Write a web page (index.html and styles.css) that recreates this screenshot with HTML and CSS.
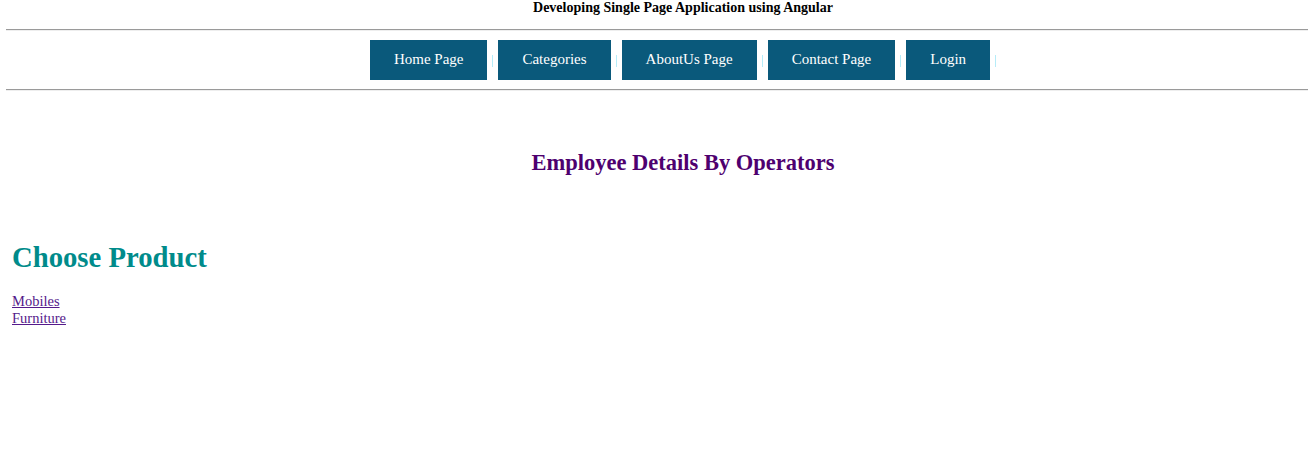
FILE: index.html
```html
<!DOCTYPE html>
<html>
<head>
<meta charset="utf-8">
<title>Angular SPA</title>
<link rel="stylesheet" href="styles.css">
</head>
<body>
<div class="page">
  <div class="title">Developing Single Page Application using Angular</div>
  <div class="rule"></div>
  <nav class="nav">
    <a class="btn" href="#">Home Page</a><span class="sep"></span>
    <a class="btn" href="#">Categories</a><span class="sep"></span>
    <a class="btn" href="#">AboutUs Page</a><span class="sep"></span>
    <a class="btn" href="#">Contact Page</a><span class="sep"></span>
    <a class="btn" href="#">Login</a><span class="sep"></span>
  </nav>
  <div class="rule"></div>
  <h2 class="emp">Employee Details By Operators</h2>
  <div class="product">
    <h1 class="choose">Choose Product</h1>
    <div class="links">
      <a class="link" href="#">Mobiles</a>
      <a class="link" href="#">Furniture</a>
    </div>
  </div>
</div>
</body>
</html>
```
FILE: styles.css
```css
html, body {
  margin: 0;
  padding: 0;
  background: #fff;
  overflow: hidden;
}
body {
  font-family: "Liberation Serif", "Times New Roman", serif;
  color: #000;
}
.page {
  width: 1354px;
  margin-left: 6px;
  display: flex;
  flex-direction: column;
}
.title {
  text-align: center;
  font-weight: bold;
  font-size: 14px;
  line-height: 15px;
  margin-top: 0;
  height: 29px;
}
.rule {
  height: 0;
  border-top: 1px solid #9a9a9a;
  border-bottom: 1px solid #eeeeee;
}
.nav {
  display: flex;
  justify-content: center;
  align-items: center;
  margin: 9px 0 9px;
  padding-left: 5px;
  height: 40px;
}
.btn {
  display: block;
  height: 40px;
  line-height: 39px;
  padding: 0 24px;
  background: #0a597b;
  color: #fff;
  text-decoration: none;
  font-size: 15px;
}
.sep {
  width: 1px;
  height: 12px;
  margin: 2px 5px 0;
  background: #b6ecf8;
}
.emp {
  margin: 59px 0 0;
  text-align: center;
  font-size: 22.5px;
  line-height: 26px;
  color: #4e006f;
}
.product {
  margin-top: 65px;
  padding-left: 6px;
}
.choose {
  margin: 0;
  font-size: 28.7px;
  line-height: 32px;
  color: #008b8b;
}
.links {
  margin-top: 20px;
  display: flex;
  flex-direction: column;
  align-items: flex-start;
}
.link {
  font-size: 14.5px;
  line-height: 17px;
  color: #551a8b;
}
```
